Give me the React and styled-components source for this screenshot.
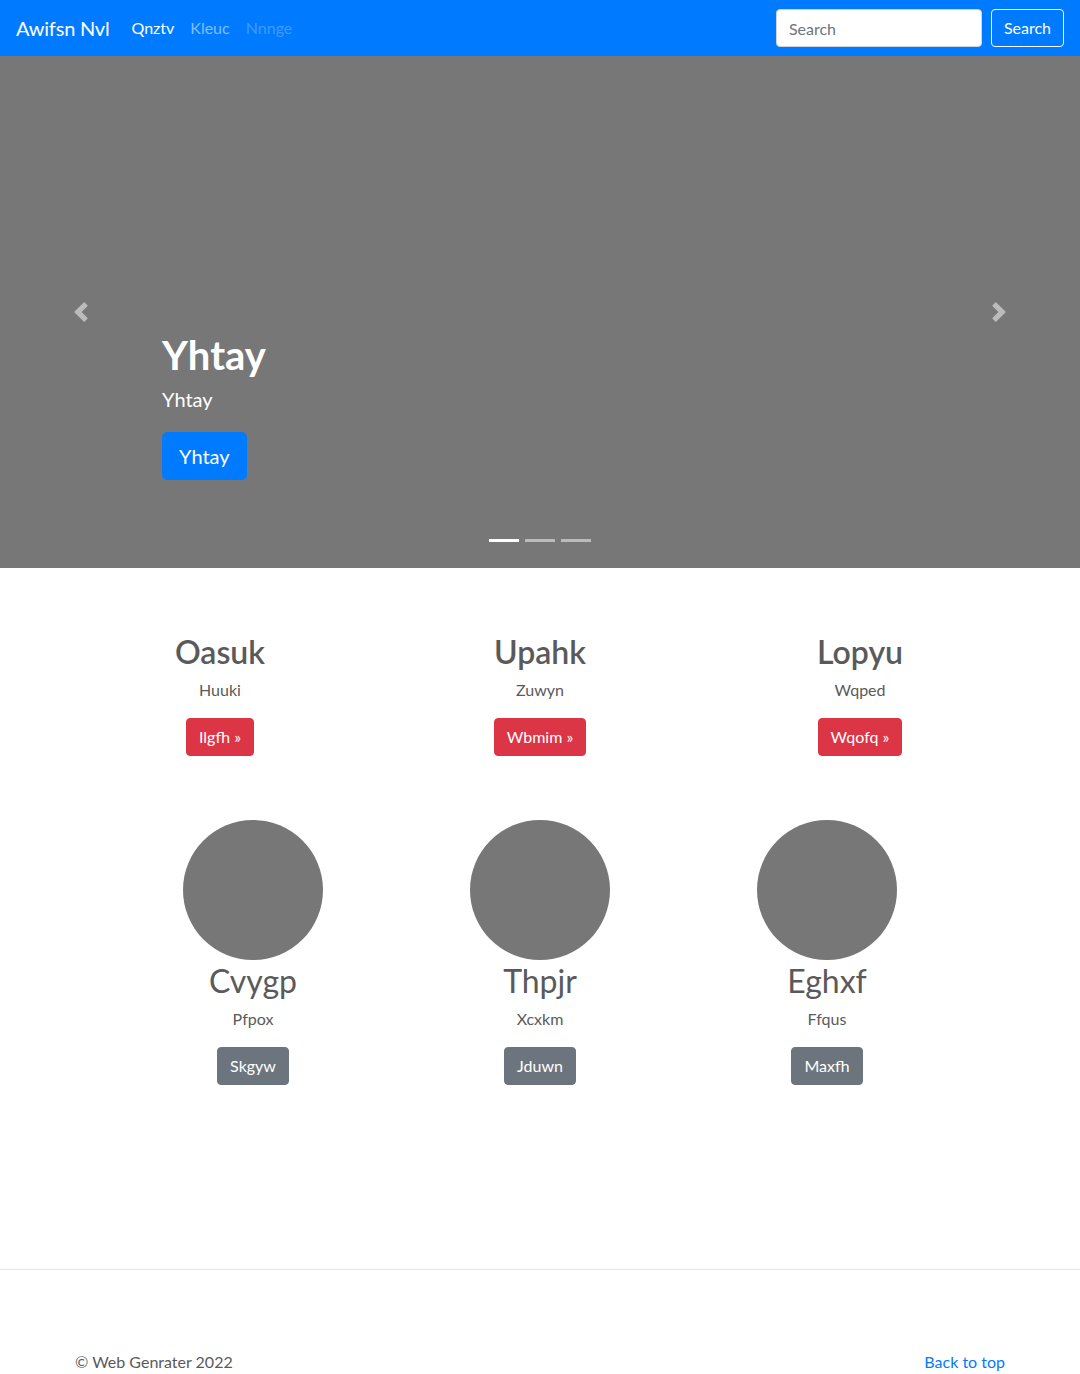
import React from 'react';
import styled, { createGlobalStyle } from 'styled-components';

const GlobalStyle = createGlobalStyle`
    html, body {
        margin: 0;
        padding: 0;
        background: #fff;
    }
    body {
        font-family: "Segoe UI", Lato, "Open Sans", sans-serif;
        font-size: 16px;
        line-height: 1.5;
        color: #5a5a5a;
    }
    * { box-sizing: border-box; }
`;

const NavBar = styled.nav`
    height: 56px;
    background-color: #007bff;
    display: flex;
    align-items: center;
    padding: 0 16px;`;

const Brand = styled.a`
    color: #fff;
    font-size: 20px;
    line-height: 30px;
    margin-right: 14px;
    letter-spacing: -0.2px;
    text-decoration: none;`;

const NavLinks = styled.div`
    display: flex;
    flex: 1;`;

const NavLink = styled.a`
    padding: 8px;
    font-size: 16px;
    text-decoration: none;
    color: ${p => p.$state === 'active' ? '#fff' : p.$state === 'disabled' ? 'rgba(255,255,255,.25)' : 'rgba(255,255,255,.5)'};`;

const SearchForm = styled.form`
    display: flex;
    gap: 9px;`;

const SearchInput = styled.input`
    width: 206px;
    height: 38px;
    padding: 6px 12px;
    font: inherit;
    font-size: 16px;
    color: #495057;
    border: 1px solid #ced4da;
    border-radius: 4px;
    outline: none;
    &::placeholder { color: #6c757d; }`;

const OutlineButton = styled.button`
    height: 38px;
    padding: 0 12px;
    font: inherit;
    font-size: 16px;
    color: #fff;
    background: transparent;
    border: 1px solid #f8f9fa;
    border-radius: 4px;`;

const Carousel = styled.div`
    position: relative;
    height: 512px;
    background-color: #777;
    display: flex;
    flex-direction: column;
    justify-content: flex-end;
    padding: 0 15% 88px;`;

const Caption = styled.div`
    color: #fff;`;

const CaptionTitle = styled.h1`
    margin: 0 0 5px;
    font-size: 40px;
    font-weight: 700;
    line-height: 48px;`;

const CaptionText = styled.p`
    margin: 0 0 18px;
    font-size: 20px;
    line-height: 30px;`;

const PrimaryLarge = styled.a`
    display: inline-block;
    padding: 8px 16px;
    font-size: 20px;
    line-height: 30px;
    color: #fff;
    background: #007bff;
    border: 1px solid #007bff;
    border-radius: 5px;
    text-decoration: none;`;

const Control = styled.span`
    position: absolute;
    top: 0;
    bottom: 0;
    ${p => p.$side}: 0;
    width: 15%;
    display: flex;
    align-items: center;
    justify-content: center;
    opacity: .5;`;

const Indicators = styled.ol`
    position: absolute;
    left: 0;
    right: 0;
    bottom: 26px;
    margin: 0;
    padding: 0;
    list-style: none;
    display: flex;
    justify-content: center;`;

const Indicator = styled.li`
    width: 30px;
    height: 3px;
    margin: 0 3px;
    background: #fff;
    opacity: ${p => p.$active ? 1 : .5};`;

const Marketing = styled.section`
    padding-top: 65px;`;

const Row = styled.div`
    display: grid;
    grid-template-columns: repeat(3, ${p => p.$col}px);
    justify-content: center;
    margin-bottom: ${p => p.$gap || 0}px;`;

const Col = styled.div`
    display: flex;
    flex-direction: column;
    align-items: center;
    text-align: center;`;

const Heading = styled.h2`
    margin: 0 0 7px;
    font-size: 32px;
    line-height: 38px;
    font-weight: ${p => p.$light ? 400 : 600};
    color: #5a5a5a;`;

const Text = styled.p`
    margin: 0 0 16px;
    font-size: 16px;
    line-height: 24px;`;

const Button = styled.a`
    display: inline-block;
    padding: 6px 12px;
    font-size: 16px;
    line-height: 24px;
    color: #fff;
    background: ${p => p.$bg};
    border: 1px solid ${p => p.$bg};
    border-radius: 4px;
    text-decoration: none;`;

const Circle = styled.div`
    width: 140px;
    height: 140px;
    border-radius: 50%;
    background: #777;
    margin-bottom: 2px;`;

const Divider = styled.hr`
    margin: 184px 0 0;
    border: 0;
    border-top: 1px solid rgba(0,0,0,.1);`;

const Footer = styled.footer`
    width: 960px;
    margin: 0 auto;
    padding: 80px 15px 12px;
    display: flex;
    justify-content: space-between;
    font-size: 16px;
    line-height: 24px;`;

const TopLink = styled.a`
    color: #007bff;
    text-decoration: none;`;

const Chevron = ({ flip }) => (
    <svg width="20" height="20" viewBox="0 0 8 8" fill="#fff" style={flip ? { transform: 'scaleX(-1)' } : undefined}>
        <path d="M5.25 0l-4 4 4 4 1.5-1.5L4.25 4l2.5-2.5L5.25 0z" />
    </svg>
);

const features = [
    { title: 'Oasuk', text: 'Huuki', btn: 'Ilgfh' },
    { title: 'Upahk', text: 'Zuwyn', btn: 'Wbmim' },
    { title: 'Lopyu', text: 'Wqped', btn: 'Wqofq' },
];

const people = [
    { title: 'Cvygp', text: 'Pfpox', btn: 'Skgyw' },
    { title: 'Thpjr', text: 'Xcxkm', btn: 'Jduwn' },
    { title: 'Eghxf', text: 'Ffqus', btn: 'Maxfh' },
];

const App = () => {
    return (
        <>
            <GlobalStyle />
            <NavBar>
                <Brand href="#">Awifsn Nvl</Brand>
                <NavLinks>
                    <NavLink $state="active" href="#">Qnztv</NavLink>
                    <NavLink href="#">Kleuc</NavLink>
                    <NavLink $state="disabled" href="#">Nnnge</NavLink>
                </NavLinks>
                <SearchForm onSubmit={e => e.preventDefault()}>
                    <SearchInput placeholder="Search" />
                    <OutlineButton type="submit">Search</OutlineButton>
                </SearchForm>
            </NavBar>
            <Carousel>
                <Caption>
                    <CaptionTitle>Yhtay</CaptionTitle>
                    <CaptionText>Yhtay</CaptionText>
                    <PrimaryLarge href="#">Yhtay</PrimaryLarge>
                </Caption>
                <Control $side="left"><Chevron /></Control>
                <Control $side="right"><Chevron flip /></Control>
                <Indicators>
                    <Indicator $active />
                    <Indicator />
                    <Indicator />
                </Indicators>
            </Carousel>
            <Marketing>
                <Row $col={320} $gap={64}>
                    {features.map(f => (
                        <Col key={f.title}>
                            <Heading>{f.title}</Heading>
                            <Text>{f.text}</Text>
                            <Button $bg="#dc3545" href="#">{f.btn} &raquo;</Button>
                        </Col>
                    ))}
                </Row>
                <Row $col={287}>
                    {people.map(f => (
                        <Col key={f.title}>
                            <Circle />
                            <Heading $light>{f.title}</Heading>
                            <Text>{f.text}</Text>
                            <Button $bg="#6c757d" href="#">{f.btn}</Button>
                        </Col>
                    ))}
                </Row>
            </Marketing>
            <Divider />
            <Footer>
                <span>&copy; Web Genrater 2022</span>
                <TopLink href="#">Back to top</TopLink>
            </Footer>
        </>
    );
}
export default App;
